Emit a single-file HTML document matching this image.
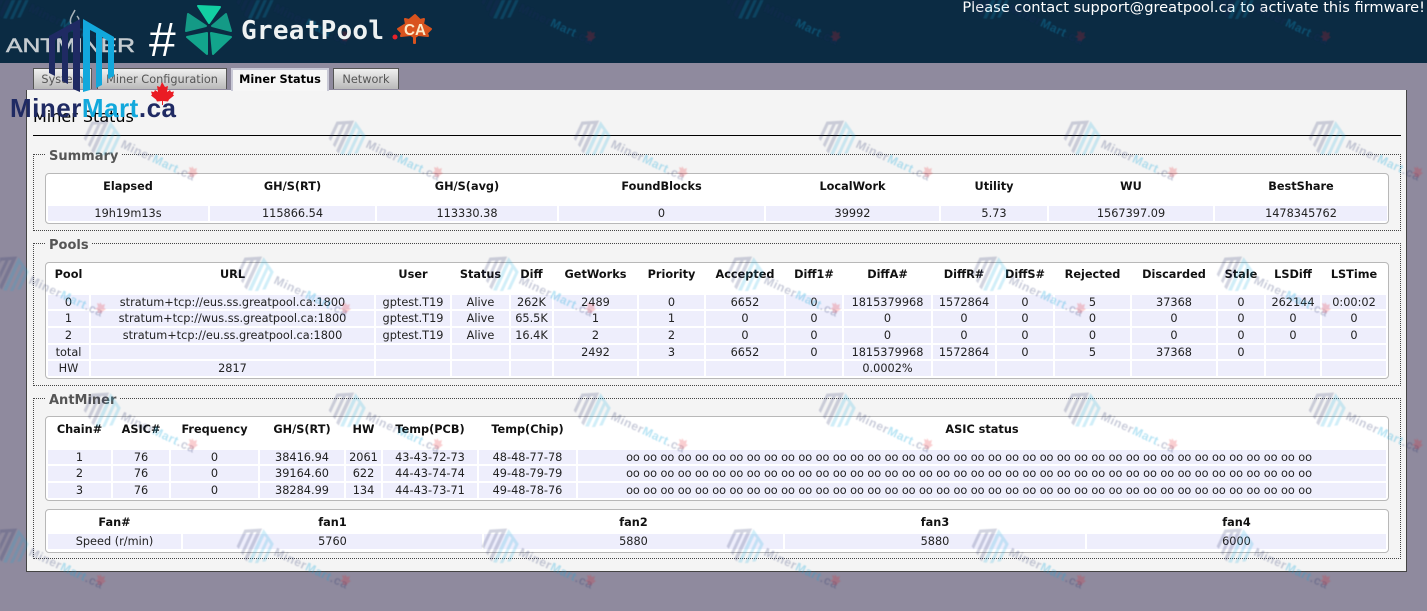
<!DOCTYPE html>
<html>
<head>
<meta charset="utf-8">
<title>Miner Status</title>
<style>
html,body{margin:0;padding:0;width:1427px;height:611px;overflow:hidden;background:#8f8a9e;font-family:"DejaVu Sans","Liberation Sans",sans-serif;font-size:11.3px;color:#222}
#head{position:absolute;left:0;top:0;width:1427px;height:63px;background:#0b2b43}
#msg{position:absolute;right:2px;top:-1px;color:#fff;font-size:14.6px;line-height:18px;white-space:nowrap}
.tab{position:absolute;top:68px;height:21px;box-sizing:border-box;border:1px solid #555;border-bottom:0;background:linear-gradient(#f0f0f0,#b9b9b9);color:#555;text-align:center;line-height:21px;white-space:nowrap}
.tab.on{background:#f6f6f6;border:2px solid #c9c9d6;border-bottom:0;color:#000;font-weight:bold;height:23px;line-height:19px;z-index:3}
#panel{position:absolute;left:26px;top:90px;width:1381px;height:482px;box-sizing:border-box;background:#f4f4f4;border-left:1px solid #444;border-right:1px solid #444;border-bottom:1px solid #444}
#h1{position:absolute;left:33px;top:107px;font-size:16px;line-height:20px;color:#000;white-space:nowrap}
#rule{position:absolute;left:33px;top:135px;width:1368px;height:1px;background:#000}
.fs{position:absolute;left:33px;width:1368px;box-sizing:border-box;border:1px dotted #444}
.lg{position:absolute;left:46px;padding:0 3px 0 3px;background:#f4f4f4;font-weight:bold;font-size:13px;line-height:16px;color:#555;white-space:nowrap}
.box{position:absolute;left:45px;width:1344px;box-sizing:border-box;background:#fff;border:1px solid #b8b8b8;border-radius:4px}
table{position:absolute;left:46px;border-collapse:separate;border-spacing:2px;table-layout:fixed}
th{padding:0;vertical-align:top;line-height:22px;font-weight:bold;color:#111;text-align:center;white-space:nowrap;overflow:hidden}
td{padding:0;background:#eeeefc;text-align:center;white-space:nowrap;overflow:hidden;color:#222}
.a td{height:13px;line-height:13px;padding-top:1px}
.b td{height:15px;line-height:15px}
td.oo{padding-right:26px;letter-spacing:-.06px;width:782px}
#wm{position:absolute;left:0;top:0;z-index:5;pointer-events:none;filter:blur(.4px)}
#logos{position:absolute;left:0;top:0;z-index:6;pointer-events:none}
</style>
</head>
<body>
<div id="head"></div>
<div id="msg">Please contact support@greatpool.ca to activate this firmware!</div>

<div class="tab" style="left:33px;width:59px">System</div>
<div class="tab" style="left:97px;width:130px">Miner Configuration</div>
<div class="tab on" style="left:231px;width:98px">Miner Status</div>
<div class="tab" style="left:333px;width:66px">Network</div>

<div id="panel"></div>
<div id="h1">Miner Status</div>
<div id="rule"></div>

<div class="fs" style="top:154px;height:77px"></div>
<div class="lg" style="top:149px">Summary</div>
<div class="box" style="top:173px;height:51px"></div>
<table style="top:174px;width:1343px">
<colgroup><col style="width:160px"><col style="width:165px"><col style="width:180px"><col style="width:205px"><col style="width:173px"><col style="width:106px"><col style="width:164px"><col style="width:172px"></colgroup>
<tr><th style="height:28px">Elapsed</th><th>GH/S(RT)</th><th>GH/S(avg)</th><th>FoundBlocks</th><th>LocalWork</th><th>Utility</th><th>WU</th><th>BestShare</th></tr>
<tr class="b"><td>19h19m13s</td><td>115866.54</td><td>113330.38</td><td>0</td><td>39992</td><td>5.73</td><td>1567397.09</td><td>1478345762</td></tr>
</table>

<div class="fs" style="top:243px;height:143px"></div>
<div class="lg" style="top:238px">Pools</div>
<div class="box" style="top:262px;height:117px"></div>
<table style="top:262px;width:1342px">
<colgroup><col style="width:41px"><col style="width:283px"><col style="width:74px"><col style="width:57px"><col style="width:41px"><col style="width:83px"><col style="width:65px"><col style="width:78px"><col style="width:56px"><col style="width:87px"><col style="width:62px"><col style="width:56px"><col style="width:75px"><col style="width:84px"><col style="width:46px"><col style="width:54px"><col style="width:64px"></colgroup>
<tr><th style="height:29px">Pool</th><th>URL</th><th>User</th><th>Status</th><th>Diff</th><th>GetWorks</th><th>Priority</th><th>Accepted</th><th>Diff1#</th><th>DiffA#</th><th>DiffR#</th><th>DiffS#</th><th>Rejected</th><th>Discarded</th><th>Stale</th><th>LSDiff</th><th>LSTime</th></tr>
<tr class="a"><td>0</td><td>stratum+tcp://eus.ss.greatpool.ca:1800</td><td>gptest.T19</td><td>Alive</td><td>262K</td><td>2489</td><td>0</td><td>6652</td><td>0</td><td>1815379968</td><td>1572864</td><td>0</td><td>5</td><td>37368</td><td>0</td><td>262144</td><td>0:00:02</td></tr>
<tr class="b"><td>1</td><td>stratum+tcp://wus.ss.greatpool.ca:1800</td><td>gptest.T19</td><td>Alive</td><td>65.5K</td><td>1</td><td>1</td><td>0</td><td>0</td><td>0</td><td>0</td><td>0</td><td>0</td><td>0</td><td>0</td><td>0</td><td>0</td></tr>
<tr class="b"><td>2</td><td>stratum+tcp://eu.ss.greatpool.ca:1800</td><td>gptest.T19</td><td>Alive</td><td>16.4K</td><td>2</td><td>2</td><td>0</td><td>0</td><td>0</td><td>0</td><td>0</td><td>0</td><td>0</td><td>0</td><td>0</td><td>0</td></tr>
<tr class="a"><td>total</td><td></td><td></td><td></td><td></td><td>2492</td><td>3</td><td>6652</td><td>0</td><td>1815379968</td><td>1572864</td><td>0</td><td>5</td><td>37368</td><td>0</td><td></td><td></td></tr>
<tr class="b"><td>HW</td><td>2817</td><td></td><td></td><td></td><td></td><td></td><td></td><td></td><td>0.0002%</td><td></td><td></td><td></td><td></td><td></td><td></td><td></td></tr>
</table>

<div class="fs" style="top:398px;height:161px"></div>
<div class="lg" style="top:393px">AntMiner</div>
<div class="box" style="top:416px;height:85px"></div>
<table style="top:417px;width:1342px">
<colgroup><col style="width:63px"><col style="width:56px"><col style="width:87px"><col style="width:84px"><col style="width:35px"><col style="width:94px"><col style="width:97px"><col style="width:808px"></colgroup>
<tr><th style="height:29px">Chain#</th><th>ASIC#</th><th>Frequency</th><th>GH/S(RT)</th><th>HW</th><th>Temp(PCB)</th><th>Temp(Chip)</th><th>ASIC status</th></tr>
<tr class="a"><td>1</td><td>76</td><td>0</td><td>38416.94</td><td>2061</td><td>43-43-72-73</td><td>48-48-77-78</td><td class="oo">oo oo oo oo oo oo oo oo oo oo oo oo oo oo oo oo oo oo oo oo oo oo oo oo oo oo oo oo oo oo oo oo oo oo oo oo oo oo oo oo</td></tr>
<tr class="b"><td>2</td><td>76</td><td>0</td><td>39164.60</td><td>622</td><td>44-43-74-74</td><td>49-48-79-79</td><td class="oo">oo oo oo oo oo oo oo oo oo oo oo oo oo oo oo oo oo oo oo oo oo oo oo oo oo oo oo oo oo oo oo oo oo oo oo oo oo oo oo oo</td></tr>
<tr class="b"><td>3</td><td>76</td><td>0</td><td>38284.99</td><td>134</td><td>44-43-73-71</td><td>49-48-78-76</td><td class="oo">oo oo oo oo oo oo oo oo oo oo oo oo oo oo oo oo oo oo oo oo oo oo oo oo oo oo oo oo oo oo oo oo oo oo oo oo oo oo oo oo</td></tr>
</table>

<div class="box" style="top:509px;height:44px"></div>
<table style="top:511px;width:1342px">
<colgroup><col style="width:133px"><col style="width:299px"><col style="width:299px"><col style="width:300px"><col style="width:299px"></colgroup>
<tr><th style="height:19px;line-height:19px">Fan#</th><th style="line-height:19px">fan1</th><th style="line-height:19px">fan2</th><th style="line-height:19px">fan3</th><th style="line-height:19px">fan4</th></tr>
<tr class="b"><td>Speed (r/min)</td><td>5760</td><td>5880</td><td>5880</td><td>6000</td></tr>
</table>

<svg id="wm" width="1427" height="611" viewBox="0 0 1427 611">
<defs>
<pattern id="p" patternUnits="userSpaceOnUse" x="73" y="117" width="245" height="272">
<g transform="translate(10,5)">
<g transform="translate(19,15) rotate(25) scale(.5) translate(-81,-55)">
<path fill="#1f2a63" fill-opacity=".2" d="M49 36L80 19V92L73 89V30L68 33V84L62 81V36L55 40V76L49 73Z"/>
<path fill="#12a8dc" fill-opacity=".2" d="M83 19L114 37V76L108 79V41L102 37V85L96 88V33L90 30V90L83 92Z"/>
</g>
<text transform="translate(37,25) rotate(25)" font-family="Liberation Sans" font-weight="bold" font-size="12" textLength="80" lengthAdjust="spacing"><tspan fill="#1f2a63" fill-opacity=".24">Miner</tspan><tspan fill="#12a8dc" fill-opacity=".3">Mart</tspan><tspan fill="#1f2a63" fill-opacity=".24">.ca</tspan></text>
<path fill="#e8202a" fill-opacity=".22" d="M109 44l2 3 3-1-1 4 2 1-4 3-.5 2-1-1.500-3 .5 .5-3-3-1 3-2-1-4 3 1z"/>
</g>
<g transform="translate(163,141)">
<g transform="translate(19,15) rotate(25) scale(.5) translate(-81,-55)">
<path fill="#1f2a63" fill-opacity=".2" d="M49 36L80 19V92L73 89V30L68 33V84L62 81V36L55 40V76L49 73Z"/>
<path fill="#12a8dc" fill-opacity=".2" d="M83 19L114 37V76L108 79V41L102 37V85L96 88V33L90 30V90L83 92Z"/>
</g>
<text transform="translate(37,25) rotate(25)" font-family="Liberation Sans" font-weight="bold" font-size="12" textLength="80" lengthAdjust="spacing"><tspan fill="#1f2a63" fill-opacity=".24">Miner</tspan><tspan fill="#12a8dc" fill-opacity=".3">Mart</tspan><tspan fill="#1f2a63" fill-opacity=".24">.ca</tspan></text>
<path fill="#e8202a" fill-opacity=".22" d="M109 44l2 3 3-1-1 4 2 1-4 3-.5 2-1-1.500-3 .5 .5-3-3-1 3-2-1-4 3 1z"/>
</g>
<g transform="translate(-82,141)">
<g transform="translate(19,15) rotate(25) scale(.5) translate(-81,-55)">
<path fill="#1f2a63" fill-opacity=".2" d="M49 36L80 19V92L73 89V30L68 33V84L62 81V36L55 40V76L49 73Z"/>
<path fill="#12a8dc" fill-opacity=".2" d="M83 19L114 37V76L108 79V41L102 37V85L96 88V33L90 30V90L83 92Z"/>
</g>
<text transform="translate(37,25) rotate(25)" font-family="Liberation Sans" font-weight="bold" font-size="12" textLength="80" lengthAdjust="spacing"><tspan fill="#1f2a63" fill-opacity=".24">Miner</tspan><tspan fill="#12a8dc" fill-opacity=".3">Mart</tspan><tspan fill="#1f2a63" fill-opacity=".24">.ca</tspan></text>
<path fill="#e8202a" fill-opacity=".22" d="M109 44l2 3 3-1-1 4 2 1-4 3-.5 2-1-1.500-3 .5 .5-3-3-1 3-2-1-4 3 1z"/>
</g>
</pattern>
</defs>
<rect width="1427" height="611" fill="url(#p)"/>
</svg>

<svg id="logos" width="1427" height="130" viewBox="0 0 1427 130">
<!-- Antminer -->
<text x="6" y="52" font-family="Liberation Sans" font-size="19" fill="#c4cbd0" stroke="#c4cbd0" stroke-width=".5" textLength="129" lengthAdjust="spacingAndGlyphs">ANTMINER</text>
<path d="M71 24c-2-5 1-8 4-14M78 24c2-3 1-6-1-8" fill="none" stroke="#a9b3ba" stroke-width="1.500"/>
<!-- hash -->
<text x="149" y="56" font-family="Liberation Sans" font-size="48" fill="#fff">#</text>
<!-- GreatPool flower -->
<g stroke-width="2" stroke-linejoin="round">
<path fill="#12cfa2" stroke="#12cfa2" d="M198 6L220 7L209 23Z"/>
<path fill="#149a86" stroke="#149a86" d="M188 14L206 26L186 31Z"/>
<path fill="#149a86" stroke="#149a86" d="M226 14L231 31L212 26Z"/>
<path fill="#12a58c" stroke="#12a58c" d="M187 37L207 33V54Z"/>
<path fill="#12a58c" stroke="#12a58c" d="M211 33L231 37L213 54Z"/>
</g>
<!-- GreatPool text -->
<text x="241" y="39" font-family="DejaVu Sans Mono" font-weight="bold" font-size="26" fill="#eef2f2" textLength="143" lengthAdjust="spacing">GreatPool</text>
<circle cx="395" cy="37" r="2.500" fill="#e8222a"/>
<path fill="#d9531e" stroke="#d9531e" stroke-width="2" stroke-linejoin="round" d="M415 15l5 5 4-1-1 5 8 5-4 4 1 3-10-1-3 2v6h-1v-6l-3-2-10 1 1-3-4-4 8-5-1-5 4 1z"/>
<text x="404" y="35" font-family="Liberation Sans" font-weight="bold" font-size="16" fill="#fbe9c8" textLength="22" lengthAdjust="spacingAndGlyphs">CA</text>
<!-- MinerMart logo -->
<path fill="#1f2a63" d="M49 36L80 19V92L73 89V30L68 33V84L62 81V36L55 40V76L49 73Z"/>
<path fill="#12a8dc" d="M83 19L114 37V76L108 79V41L102 37V85L96 88V33L90 30V90L83 92Z"/>
<text x="10" y="117" font-family="Liberation Sans" font-weight="bold" font-size="26" textLength="166" lengthAdjust="spacing"><tspan fill="#1f2a63">Miner</tspan><tspan fill="#12a8dc">Mart</tspan><tspan fill="#1f2a63">.ca</tspan></text>
<path fill="#ea1c24" d="M162 82l3 5 3-1-1 6 3-2 1 2 3-.5-1 3 1 1-5 4-1 2-5-.5v4h-1v-4l-5 .5-1-2-5-4 1-1-1-3 3 .5 1-2 3 2-1-6 3 1z"/>
</svg>
</body>
</html>
